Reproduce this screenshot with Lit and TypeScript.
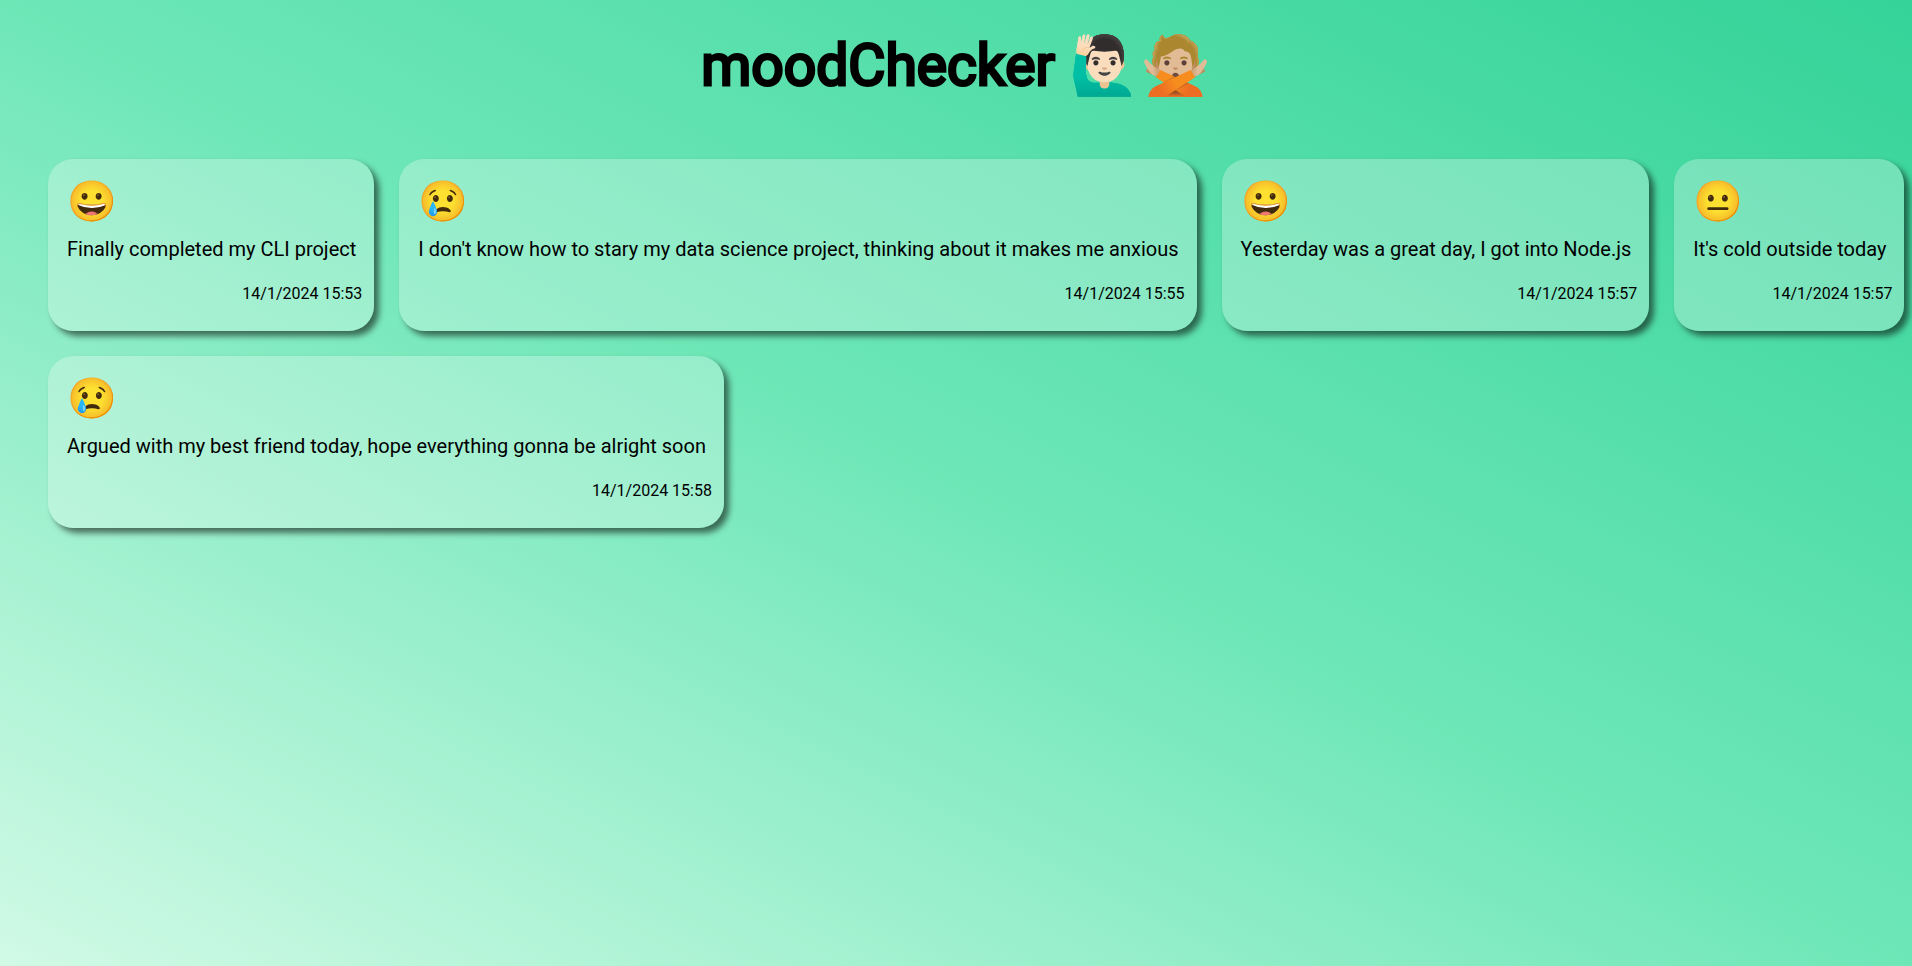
import { LitElement, html, css } from "lit";
import { customElement } from "lit/decorators.js";

interface Mood { emoji: string; text: string; date: string }

const moods: Mood[] = [
  { emoji: "😀", text: "Finally completed my CLI project", date: "14/1/2024 15:53" },
  { emoji: "😢", text: "I don't know how to stary my data science project, thinking about it makes me anxious", date: "14/1/2024 15:55" },
  { emoji: "😀", text: "Yesterday was a great day, I got into Node.js", date: "14/1/2024 15:57" },
  { emoji: "😐", text: "It's cold outside today", date: "14/1/2024 15:57" },
  { emoji: "😢", text: "Argued with my best friend today, hope everything gonna be alright soon", date: "14/1/2024 15:58" },
];

@customElement("app-root")
export class AppRoot extends LitElement {
  static styles = css`
    :host {
      display: block;
      box-sizing: border-box;
      min-height: 100vh;
      overflow: hidden;
      font-family: Roboto, sans-serif;
      color: #000;
      background: linear-gradient(to top right, #d1fae5, #6ee7b7, #34d399);
    }
    .title {
      margin: 31px 0 58px;
      font-size: 57px;
      line-height: 70px;
      text-align: center;
      font-weight: 400;
      -webkit-text-stroke: 3px #000;
    }
    .moods {
      list-style: none;
      margin: 0;
      padding: 0 0 0 48px;
      display: flex;
      flex-wrap: wrap;
      gap: 25px;
    }
    .mood {
      padding: 19px 18px 25px 19px;
      border-radius: 25px;
      background: rgba(255, 255, 255, 0.28);
      box-shadow: 5px 5px 6px rgba(0, 0, 0, 0.55);
    }
    .emoji { font-size: 40px; line-height: 48px; }
    .text { margin: 11px 0 21px; font-size: 20px; line-height: 24px; }
    .date {
      display: block;
      margin-right: -6px;
      font-size: 16px;
      line-height: 24px;
      text-align: right;
    }
  `;

  render() {
    return html`
      <h1 class="title">moodChecker 🙋🏻‍♂️🙅🏼</h1>
      <ul class="moods">
        ${moods.map(
          (m) => html`<li class="mood">
            <div class="emoji">${m.emoji}</div>
            <p class="text">${m.text}</p>
            <time class="date">${m.date}</time>
          </li>`,
        )}
      </ul>
    `;
  }
}
